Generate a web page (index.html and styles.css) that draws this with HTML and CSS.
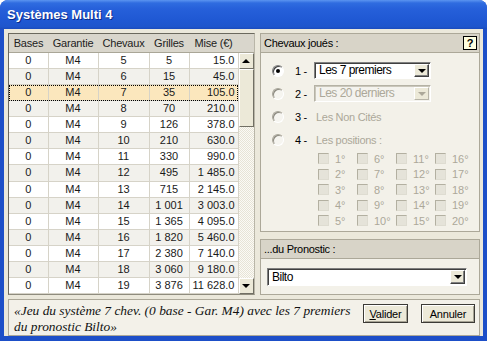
FILE: index.html
```html
<!DOCTYPE html>
<html lang="fr">
<head>
    <meta charset="UTF-8">
    <title>Systèmes Multi 4</title>
    <link rel="stylesheet" href="styles.css">
</head>
<body>

<div class="window">
    <div class="titlebar">Systèmes Multi 4</div>
    <div class="client">
        <div class="main">
            <div class="grid">
                <div class="grid-head">
                    <span class="c1">Bases</span>
                    <span class="c2">Garantie</span>
                    <span class="c3">Chevaux</span>
                    <span class="c4">Grilles</span>
                    <span class="c5">Mise (€)</span>
                </div>
                <div class="grid-body">
                    <table class="rows">
                        <colgroup><col class="c1"><col class="c2"><col class="c3"><col class="c4"><col class="c5"></colgroup>
                        <tbody id="rows"></tbody>
                    </table>
                    <div class="vscroll">
                        <div class="sb-btn"><span class="tri-up"></span></div>
                        <div class="sb-thumb"></div>
                        <div class="sb-track"></div>
                        <div class="sb-btn"><span class="tri-down"></span></div>
                    </div>
                </div>
            </div>

            <div class="side">
                <div class="group chevaux">
                    <div class="group-head">Chevaux joués :<span class="help">?</span></div>
                    <div class="group-body">
                        <div class="opt">
                            <span class="radio checked"></span><span class="num">1 -</span>
                            <div class="combo"><span class="combo-text">Les 7 premiers</span><span class="combo-btn"><span class="tri-down"></span></span></div>
                        </div>
                        <div class="opt">
                            <span class="radio off"></span><span class="num">2 -</span>
                            <div class="combo disabled"><span class="combo-text">Les 20 derniers</span><span class="combo-btn"><span class="tri-down"></span></span></div>
                        </div>
                        <div class="opt">
                            <span class="radio off"></span><span class="num">3 -</span><span class="dim">Les Non Cités</span>
                        </div>
                        <div class="opt">
                            <span class="radio off"></span><span class="num">4 -</span><span class="dim">Les positions :</span>
                        </div>
                        <div class="positions" id="positions"></div>
                    </div>
                </div>
                <div class="group prono">
                    <div class="group-head">...du Pronostic :</div>
                    <div class="group-body">
                        <div class="combo wide"><span class="combo-text">Bilto</span><span class="combo-btn"><span class="tri-down"></span></span></div>
                    </div>
                </div>
            </div>
        </div>

        <div class="status">
            <p class="summary">«Jeu du système 7 chev. (0 base - Gar. M4) avec les 7 premiers<br>du pronostic Bilto»</p>
            <div class="actions">
                <button class="btn btn-ok"><u>V</u>alider</button>
                <button class="btn btn-cancel">Annuler</button>
            </div>
        </div>
    </div>
</div>

<script>
    // --- lignes du tableau ---
    const grilles = ['5', '15', '35', '70', '126', '210', '330', '495', '715', '1 001', '1 365', '1 820', '2 380', '3 060', '3 876'];
    const mises = ['15.0', '45.0', '105.0', '210.0', '378.0', '630.0', '990.0', '1 485.0', '2 145.0', '3 003.0', '4 095.0', '5 460.0', '7 140.0', '9 180.0', '11 628.0'];
    const tbody = document.getElementById('rows');

    grilles.forEach(function(g, i) {
        const tr = document.createElement('tr');
        if (i === 2) tr.className = 'sel';
        else if (i % 2 === 1) tr.className = 'alt';
        tr.innerHTML = `<td>0</td><td>M4</td><td>${i + 5}</td><td>${g}</td><td class="mise">${mises[i]}</td>`;
        tbody.appendChild(tr);
    });

    // --- cases des positions ---
    const positions = document.getElementById('positions');
    for (let n = 1; n <= 20; n++) {
        const cell = document.createElement('div');
        cell.className = 'pos';
        cell.innerHTML = `<span class="box"></span>${n}°`;
        positions.appendChild(cell);
    }
</script>

</body>
</html>
```

FILE: styles.css
```css
body { margin: 0; background: #fff; font-family: "Liberation Sans", Arial, sans-serif; font-size: 11px; color: #000; }
.window { width: 487px; height: 341px; background: #1d4fc8; border-radius: 8px 8px 0 0; display: flex; flex-direction: column; }
.titlebar { height: 29px; padding-left: 7px; line-height: 30px; color: #fff; font-size: 13px; font-weight: bold; text-shadow: 1px 1px #0c2a86; border-radius: 8px 8px 0 0; background: linear-gradient(180deg, #5b94f0 0, #2f6ce0 3px, #2660da 30%, #1f58d3 70%, #1e55cc 92%, #1a4bbd 100%); }
.client { margin: 0 4px 5px; height: 307px; box-sizing: border-box; padding: 4px 3px 1px 4px; background: #ebe8db; display: flex; flex-direction: column; gap: 4px; }
.main { display: flex; gap: 5px; height: 262px; }

/* tableau */
.grid { width: 247px; box-sizing: border-box; border: 1px solid; border-color: #6b695e #b9b6a8 #8f8c7e #6b695e; background: #fff; }
.grid-head { display: flex; height: 18px; line-height: 18px; background: #d9d6cc; border-bottom: 1px solid #a9a697; color: #222; letter-spacing: -0.2px; }
.grid-head span { text-align: center; }
.c1 { width: 39px; }
.c2 { width: 50px; }
.c3 { width: 51px; }
.c4 { width: 40px; }
.c5 { width: 49px; }
.grid-body { display: flex; height: 241px; }
.rows { width: 229px; border-collapse: collapse; table-layout: fixed; }
.rows td { height: 15px; padding: 0; line-height: 15px; text-align: center; color: #1a1a1a; border-right: 1px solid #d6d3c8; border-bottom: 1px solid #d6d3c8; }
.rows td.mise { text-align: right; padding-right: 3px; }
.rows tr.alt td { background: #f2f1ec; }
.rows tr.sel td { background: #fbe7bd; }
.rows tr.sel { outline: 1px dotted #000; outline-offset: -1px; }

.vscroll { width: 16px; display: flex; flex-direction: column; background: repeating-conic-gradient(#fbfaf6 0 25%, #e7e4d6 0 50%) 0 0 / 2px 2px; }
.sb-btn, .sb-thumb { box-sizing: border-box; background: #ece9d8; border: 1px solid; border-color: #fff #716f64 #716f64 #fff; }
.sb-btn { height: 16px; display: flex; align-items: center; justify-content: center; }
.sb-thumb { height: 58px; }
.sb-track { flex: 1; }
.tri-up { border-left: 4px solid transparent; border-right: 4px solid transparent; border-bottom: 4px solid #000; }
.tri-down { border-left: 4px solid transparent; border-right: 4px solid transparent; border-top: 4px solid #000; }

/* groupes de droite */
.side { width: 220px; display: flex; flex-direction: column; gap: 7px; }
.group { box-sizing: border-box; border: 1px solid #aca899; background: #f3f1e9; }
.chevaux { flex: 1; }
.prono { height: 56px; }
.group-head { height: 18px; line-height: 18px; padding-left: 3px; background: #d8d4c8; border-bottom: 1px solid #aca899; display: flex; justify-content: space-between; align-items: center; letter-spacing: -0.3px; }
.help { width: 12px; height: 12px; margin-right: 2px; border: 1px solid #000; background: #ffffe1; font-weight: bold; text-align: center; line-height: 12px; letter-spacing: 0; }
.chevaux .group-body { padding: 6px 0 0 11px; }
.prono .group-body { padding: 9px 0 0 6px; }

.opt { display: flex; align-items: center; height: 23px; }
.radio { position: relative; width: 12px; height: 12px; box-sizing: border-box; border-radius: 50%; border: 1px solid; border-color: #808080 #fff #fff #808080; box-shadow: inset 1px 1px 0 #404040; background: #fff; margin-right: 11px; }
.radio.off { background: #f6f5f0; border-color: #a8a59a #fff #fff #a8a59a; box-shadow: inset 1px 1px 0 #8b897f; }
.radio.checked::after { content: ""; position: absolute; left: 3px; top: 3px; width: 4px; height: 4px; border-radius: 50%; background: #000; }
.num { width: 19px; letter-spacing: -0.3px; }
.dim { color: #aca899; padding-left: 2px; letter-spacing: -0.3px; }

.combo { width: 117px; height: 17px; box-sizing: border-box; display: flex; align-items: stretch; border: 1px solid; border-color: #808080 #fff #fff #808080; box-shadow: inset 1px 1px 0 #404040; background: #fff; padding: 1px 1px 1px 1px; }
.combo.wide { width: 200px; height: 18px; }
.combo-text { flex: 1; padding-left: 3px; line-height: 13px; font-size: 12px; letter-spacing: -0.5px; }
.combo.wide .combo-text { line-height: 14px; }
.combo-btn { width: 15px; box-sizing: border-box; display: flex; align-items: center; justify-content: center; background: #ece9d8; border: 1px solid; border-color: #fff #404040 #404040 #fff; box-shadow: inset -1px -1px 0 #808080; }
.combo.disabled { background: #f4f3ee; border-color: #b5b2a5 #fff #fff #b5b2a5; box-shadow: inset 1px 1px 0 #cac7bb; }
.combo.disabled .combo-text { color: #aca899; }
.combo.disabled .combo-btn { border-color: #fff #b8b5a8 #b8b5a8 #fff; box-shadow: none; }
.combo.disabled .tri-down { border-top-color: #aca899; }

.positions { display: grid; grid-auto-flow: column; grid-template-rows: repeat(5, 15.5px); grid-template-columns: repeat(4, 39px); padding-left: 46px; }
.pos { display: flex; align-items: center; color: #aca899; }
.box { width: 11px; height: 11px; box-sizing: border-box; margin-right: 6px; border: 1px solid; border-color: #b3b0a1 #dedcd1 #dedcd1 #b3b0a1; background: #e5e3d9; }

/* barre du bas */
.status { flex: 1; box-sizing: border-box; display: flex; justify-content: space-between; padding: 3px 4px 0 5px; border: 1px solid #aca899; background: #f3f1e9; }
.summary { margin: 0; font-family: "Liberation Serif", "Times New Roman", serif; font-style: italic; font-size: 13.4px; line-height: 16px; white-space: nowrap; color: #111; }
.actions { display: flex; gap: 13px; margin-top: 1px; }
.btn { height: 19px; padding: 0; font-family: "Liberation Sans", Arial, sans-serif; font-size: 11px; letter-spacing: -0.2px; color: #000; background: #ece9d8; border: 1px solid #3c3b36; box-shadow: inset 1px 1px 0 #fff, inset -1px -1px 0 #a6a394; }
.btn-ok { width: 45px; }
.btn-cancel { width: 54px; }
```
